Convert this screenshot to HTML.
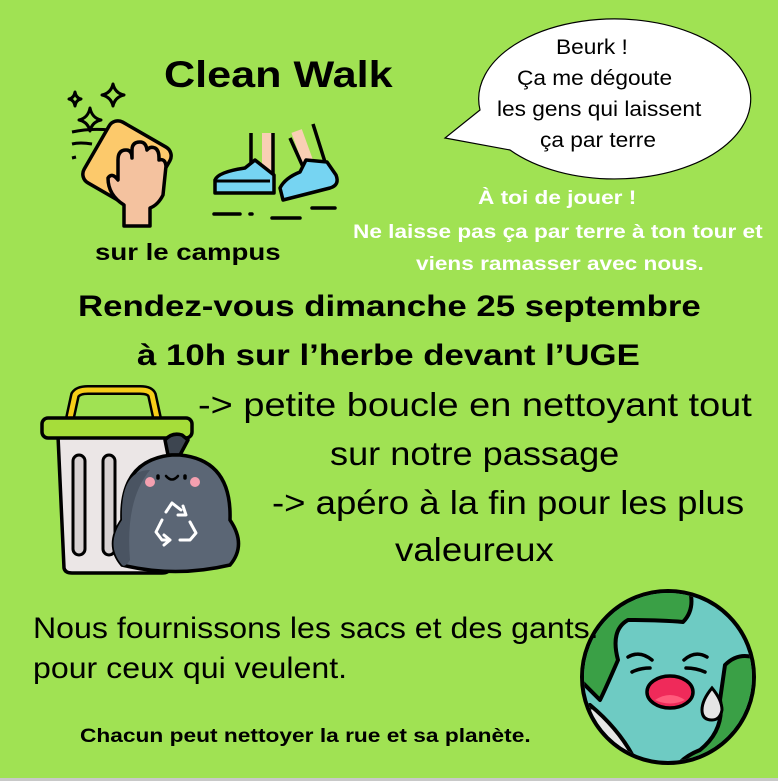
<!DOCTYPE html>
<html><head><meta charset="utf-8"><style>
body{margin:0;width:778px;height:781px;background:#a0e253;position:relative;overflow:hidden;font-family:"Liberation Sans",sans-serif;color:#000}
.t{position:absolute;white-space:nowrap;transform-origin:left top}
.b{font-weight:bold}
.w{color:#fff;font-weight:bold}
</style></head><body>
<div style="position:absolute;left:0;bottom:0;width:778px;height:3px;background:#c8c8c8"></div>

<div class="t b" style="left:164px;top:54px;font-size:37px;transform:scaleX(1.166)">Clean Walk</div>
<div class="t b" style="left:95px;top:239px;font-size:23px;transform:scaleX(1.2)">sur le campus</div>

<svg style="position:absolute;left:0;top:0" width="778" height="781">
 <path d="M480,110 A136,80 0 1 1 510,150 L445,138 Z" fill="#fff" stroke="#000" stroke-width="1.2"/>
 <g fill="none" stroke="#000" stroke-width="3" stroke-linejoin="round">
  <path d="M113,84 Q115,93 124,95 Q115,97 113,106 Q111,97 102,95 Q111,93 113,84Z"/>
  <path d="M75,92 Q76,98 81,99 Q76,100 75,106 Q74,100 69,99 Q74,98 75,92Z"/>
  <path d="M90,108 Q92,118 101,120 Q92,122 90,131 Q88,122 79,120 Q88,118 90,108Z"/>
  <path d="M72,132 Q90,128 110,130 M72,144 Q80,142 92,144 M72,158 L76,157"/>
 </g>
 <rect x="92" y="130" width="70" height="70" rx="10" transform="rotate(30 127 165)" fill="#fcc96b" stroke="#000" stroke-width="3.5"/>
 <path d="M124,226 L124,205 Q108,195 108,178 Q112,172 118,180 L118,160 Q118,150 126,150 Q132,150 132,158 L132,150 Q132,142 140,142 Q146,142 147,150 Q150,146 155,148 Q159,150 159,158 L159,160 Q165,158 166,166 L163,195 Q158,205 150,208 L150,226 Z" fill="#f4c29f" stroke="#000" stroke-width="3.5" stroke-linejoin="round"/>
 <rect x="262" y="133" width="11" height="52" fill="#f9cfb4"/>
 <path d="M251,133 L251,183 M273,133 L273,185" stroke="#000" stroke-width="3.5"/>
 <path d="M215,193 L215,180 Q218,172 245,168 L255,160 L274,175 L274,193 Z" fill="#76d4f2" stroke="#000" stroke-width="3.5" stroke-linejoin="round"/>
 <path d="M215,181 L270,181" stroke="#000" stroke-width="3"/>
 <rect x="298" y="130" width="11" height="40" transform="rotate(-20 303 150)" fill="#f9cfb4"/>
 <path d="M290,138 L308,178 M313,124 L325,162" stroke="#000" stroke-width="3.5"/>
 <path d="M283,200 L280,188 Q285,178 300,172 L306,160 L327,162 L336,175 Q340,185 330,188 Z" fill="#76d4f2" stroke="#000" stroke-width="3.5" stroke-linejoin="round"/>
 <path d="M214,214 L240,214 M250,214 L252,214 M272,218 L300,218 M312,208 L335,208" stroke="#000" stroke-width="3.5" stroke-linecap="round"/>
 <path d="M70,418 L75,395 Q78,390 88,390 L140,390 Q150,390 152,395 L157,418" fill="none" stroke="#000" stroke-width="10" stroke-linejoin="round"/>
 <path d="M70,418 L75,395 Q78,390 88,390 L140,390 Q150,390 152,395 L157,418" fill="none" stroke="#f6cd18" stroke-width="5" stroke-linejoin="round"/>
 <path d="M58,436 L178,436 L170,568 Q169,573 162,573 L72,573 Q65,573 64,568 Z" fill="#ebe6e6" stroke="#000" stroke-width="3.5"/>
 <rect x="42" y="418" width="150" height="20" rx="6" fill="#a6dd3a" stroke="#000" stroke-width="3.5"/>
 <g fill="#d8d2d2" stroke="#000" stroke-width="3">
  <rect x="73" y="455" width="12" height="100" rx="6"/>
  <rect x="103" y="455" width="12" height="100" rx="6"/>
 </g>
 <path d="M165,440 Q172,432 182,435 L188,440 L180,455 L168,455 Z" fill="#3d4550" stroke="#000" stroke-width="3.5" stroke-linejoin="round"/>
 <path d="M172,455 Q120,460 122,520 Q105,545 122,565 Q175,578 230,565 Q247,545 230,520 Q232,460 180,455 Z" fill="#5b6675" stroke="#000" stroke-width="3.5"/>
 <path d="M150,470 Q125,500 130,560 Q125,568 122,565 Q105,545 122,520 Q120,470 150,470Z" fill="#4a5462"/>
 <circle cx="150" cy="482" r="5" fill="#f4a0b0"/><circle cx="195" cy="482" r="5" fill="#f4a0b0"/>
 <path d="M158,476 L158,478 M185,476 L185,478" stroke="#000" stroke-width="3.5" stroke-linecap="round"/>
 <path d="M166,476 Q172,483 178,476" fill="none" stroke="#000" stroke-width="2.5" stroke-linecap="round"/>
 <g fill="none" stroke="#fff" stroke-width="3" stroke-linecap="round" stroke-linejoin="round">
  <path d="M166,512 L172,503 L181,510 M183,506 L186,515 L178,515"/>
  <path d="M162,520 L156,532 L162,540 L170,540 M164,535 L170,540 L164,545"/>
  <path d="M190,522 L196,533 L190,540 L180,540"/>
 </g>
 <circle cx="668" cy="677" r="86" fill="#6ecbc3" stroke="#000" stroke-width="4"/>
 <clipPath id="c"><circle cx="668" cy="677" r="84"/></clipPath>
 <g clip-path="url(#c)" stroke="#000" stroke-width="4" stroke-linejoin="round">
  <path d="M580,680 L580,590 L690,590 Q695,610 683,622 Q660,620 628,620 Q610,630 618,660 Q605,690 600,700 Z" fill="#3aa046"/>
  <path d="M725,665 Q740,650 760,660 L760,780 L670,780 Q675,760 700,750 Q725,730 720,700 Z" fill="#3aa046"/>
  <path d="M590,705 Q620,730 635,760 L580,770 Z" fill="#e5e5e5"/>
 </g>
 <g fill="none" stroke="#000" stroke-width="3.5" stroke-linecap="round">
  <path d="M628,657 Q640,650 652,660 M632,672 Q640,668 650,668 M684,660 Q695,650 707,657 M686,668 Q696,668 705,672"/>
 </g>
 <ellipse cx="670" cy="692" rx="23" ry="16" fill="#ef2a5a" stroke="#000" stroke-width="3.5"/>
 <path d="M655,700 Q670,690 685,700 Q670,707 655,700Z" fill="#ff5b7c"/>
 <path d="M712,688 Q722,700 722,710 Q720,720 712,720 Q702,720 702,710 Q702,700 712,688Z" fill="#e5e5e5" stroke="#000" stroke-width="3"/>
</svg>

<div class="t" style="left:556px;top:36px;font-size:21px;transform:scaleX(1.08)">Beurk !</div>
<div class="t" style="left:517px;top:67px;font-size:21px;transform:scaleX(1.08)">Ça me dégoute</div>
<div class="t" style="left:497px;top:98px;font-size:21px;transform:scaleX(1.08)">les gens qui laissent</div>
<div class="t" style="left:540px;top:129px;font-size:21px;transform:scaleX(1.08)">ça par terre</div>

<div class="t w" style="left:478px;top:188px;font-size:19px;transform:scaleX(1.19)">À toi de jouer !</div>
<div class="t w" style="left:353px;top:222px;font-size:19px;transform:scaleX(1.19)">Ne laisse pas ça par terre à ton tour et</div>
<div class="t w" style="left:416px;top:254px;font-size:19px;transform:scaleX(1.19)">viens ramasser avec nous.</div>

<div class="t b" style="left:78px;top:290px;font-size:30px;transform:scaleX(1.16)">Rendez-vous dimanche 25 septembre</div>
<div class="t b" style="left:137px;top:339px;font-size:30px;transform:scaleX(1.16)">à 10h sur l’herbe devant l’UGE</div>

<div class="t" style="left:198px;top:386px;font-size:33px;transform:scaleX(1.15)">-&gt; petite boucle en nettoyant tout</div>
<div class="t" style="left:330px;top:435px;font-size:33px;transform:scaleX(1.095)">sur notre passage</div>
<div class="t" style="left:272px;top:484px;font-size:33px;transform:scaleX(1.107)">-&gt; apéro à la fin pour les plus</div>
<div class="t" style="left:395px;top:531px;font-size:33px;transform:scaleX(1.11)">valeureux</div>

<div class="t" style="left:33px;top:612px;font-size:30px;transform:scaleX(1.07)">Nous fournissons les sacs et des gants.</div>
<div class="t" style="left:33px;top:652px;font-size:30px;transform:scaleX(1.07)">pour ceux qui veulent.</div>

<div class="t b" style="left:80px;top:725px;font-size:19.5px;transform:scaleX(1.165)">Chacun peut nettoyer la rue et sa planète.</div>
</body></html>
